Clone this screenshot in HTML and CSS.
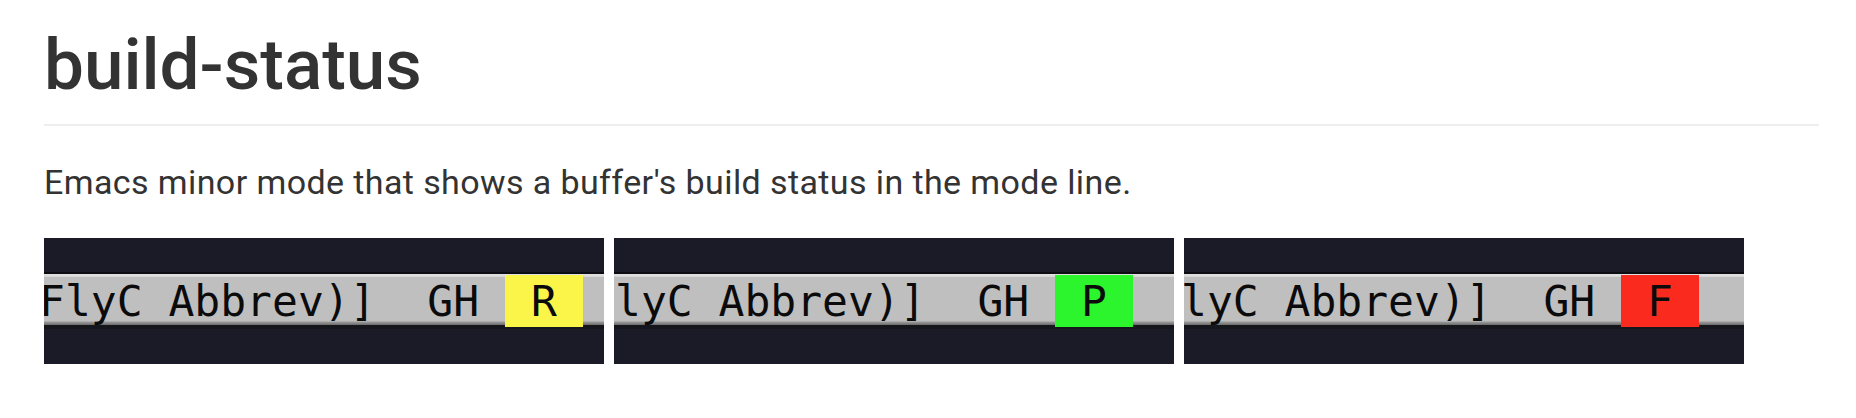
FILE: index.html
```html
<!DOCTYPE html>
<html lang="en">
<head>
<meta charset="utf-8">
<title>build-status</title>
<link rel="stylesheet" href="styles.css">
</head>
<body>
<article class="readme">
  <h1 class="title">build-status</h1>
  <p class="lead">Emacs minor mode that shows a buffer's build status in the mode line.</p>
  <div class="shots">
    <div class="shot">
      <div class="modeline">
        <div class="ml-text ml-1"><span class="seg">FlyC Abbrev)]  GH </span><span class="st st-running"> R </span></div>
      </div>
    </div>
    <div class="shot">
      <div class="modeline">
        <div class="ml-text ml-2"><span class="seg">lyC Abbrev)]  GH </span><span class="st st-passed"> P </span></div>
      </div>
    </div>
    <div class="shot">
      <div class="modeline">
        <div class="ml-text ml-3"><span class="seg">lyC Abbrev)]  GH </span><span class="st st-failed"> F </span></div>
      </div>
    </div>
  </div>
</article>
</body>
</html>
```
FILE: styles.css
```css
html, body {
  margin: 0;
  padding: 0;
  background: #ffffff;
}

.readme {
  width: 1775px;
  padding: 0 0 0 44px;
  color: #333333;
  font-family: Roboto, "Open Sans", sans-serif;
}

.title {
  margin: 25px 0 32px 0;
  padding: 0 0 19px 0;
  font-size: 71px;
  line-height: 80px;
  font-weight: 500;
  border-bottom: 2px solid #eeeeee;
}

.lead {
  margin: 0 0 32px 0;
  font-size: 34px;
  line-height: 48px;
  letter-spacing: 0.4px;
}

.shots {
  display: flex;
  gap: 10px;
}

.shot {
  width: 560px;
  height: 126px;
  padding-top: 34px;
  box-sizing: border-box;
  background: #1a1b26;
  overflow: hidden;
}

.modeline {
  height: 57px;
  background: linear-gradient(to bottom,
    #0c0d12 0px, #0c0d12 2px,
    #e2e2e2 2px, #d6d6d6 5px,
    #bfbfbf 5px, #bfbfbf 49px,
    #9a9a9a 50px, #6a6a6a 53px,
    #15161c 53px, #15161c 57px);
  overflow: hidden;
}

.ml-text {
  display: flex;
  height: 52px;
  margin-top: 3px;
  white-space: pre;
  font-family: "DejaVu Sans Mono", monospace;
  font-size: 43px;
  line-height: 52px;
  color: #0b0b0b;
}

.ml-1 { margin-left: -5px; }
.ml-2 { margin-left: 1px; }
.ml-3 { margin-left: -3px; }

.st {
  display: block;
}

.st-running { background: #fbf54a; }
.st-passed  { background: #2df52d; }
.st-failed  { background: #fb2a1e; }
```
